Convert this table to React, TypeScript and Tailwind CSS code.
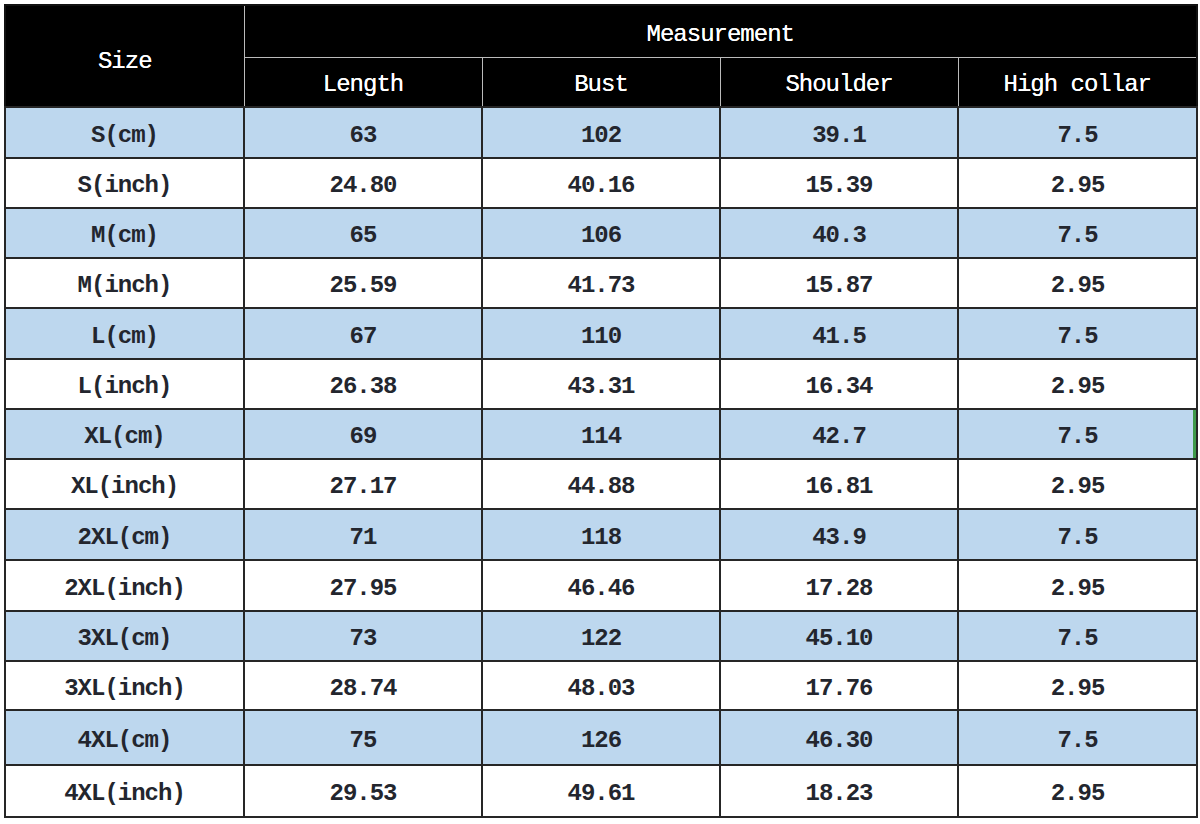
const cols = ["Length", "Bust", "Shoulder", "High collar"];

const rows: { size: string; vals: string[]; h: string }[] = [
  { size: "S(cm)", vals: ["63", "102", "39.1", "7.5"], h: "h-[51px]" },
  { size: "S(inch)", vals: ["24.80", "40.16", "15.39", "2.95"], h: "h-[50px]" },
  { size: "M(cm)", vals: ["65", "106", "40.3", "7.5"], h: "h-[50px]" },
  { size: "M(inch)", vals: ["25.59", "41.73", "15.87", "2.95"], h: "h-[50px]" },
  { size: "L(cm)", vals: ["67", "110", "41.5", "7.5"], h: "h-[51px]" },
  { size: "L(inch)", vals: ["26.38", "43.31", "16.34", "2.95"], h: "h-[50px]" },
  { size: "XL(cm)", vals: ["69", "114", "42.7", "7.5"], h: "h-[50px]" },
  { size: "XL(inch)", vals: ["27.17", "44.88", "16.81", "2.95"], h: "h-[50px]" },
  { size: "2XL(cm)", vals: ["71", "118", "43.9", "7.5"], h: "h-[51px]" },
  { size: "2XL(inch)", vals: ["27.95", "46.46", "17.28", "2.95"], h: "h-[51px]" },
  { size: "3XL(cm)", vals: ["73", "122", "45.10", "7.5"], h: "h-[50px]" },
  { size: "3XL(inch)", vals: ["28.74", "48.03", "17.76", "2.95"], h: "h-[49px]" },
  { size: "4XL(cm)", vals: ["75", "126", "46.30", "7.5"], h: "h-[55px]" },
  { size: "4XL(inch)", vals: ["29.53", "49.61", "18.23", "2.95"], h: "h-[52px]" },
];

export default function App() {
  return (
    <div className="h-[824px] w-[1200px] bg-white pl-[4px] pt-[4px] font-['Liberation_Mono',monospace] text-[24px] tracking-[-1px]">
      <table className="w-[1192px] table-fixed border-collapse border-2 border-[#111]">
        <colgroup>
          <col className="w-[239px]" />
          <col className="w-[238px]" />
          <col className="w-[238px]" />
          <col className="w-[238px]" />
          <col className="w-[239px]" />
        </colgroup>
        <thead className="bg-black text-white [text-shadow:0_0_0.6px_#fff]">
          <tr className="h-[52px]">
            <th
              rowSpan={2}
              className="border border-[#111] border-r-[#bbb] pt-3 font-normal"
            >
              Size
            </th>
            <th
              colSpan={4}
              className="border border-[#111] border-b-[#bbb] pt-2 font-normal"
            >
              Measurement
            </th>
          </tr>
          <tr className="h-[50px]">
            {cols.map((c, i) => (
              <th
                key={c}
                className={`border-b border-[#111] pt-[6px] font-normal ${
                  i < 3 ? "border-r border-r-[#bbb]" : ""
                }`}
              >
                {c}
              </th>
            ))}
          </tr>
        </thead>
        <tbody className="font-bold text-[#23262e]">
          {rows.map((r, ri) => (
            <tr
              key={r.size}
              className={`${r.h} ${ri % 2 === 0 ? "bg-[#bdd7ee]" : "bg-white"}`}
            >
              <td className="border-2 border-[#262626] pt-[6px] text-center">
                {r.size}
              </td>
              {r.vals.map((v, vi) => (
                <td
                  key={vi}
                  className={`border-2 border-[#262626] pt-[6px] text-center ${
                    r.size === "XL(cm)" && vi === 3
                      ? "shadow-[inset_-3px_0_0_#3f9a4a]"
                      : ""
                  }`}
                >
                  {v}
                </td>
              ))}
            </tr>
          ))}
        </tbody>
      </table>
    </div>
  );
}
